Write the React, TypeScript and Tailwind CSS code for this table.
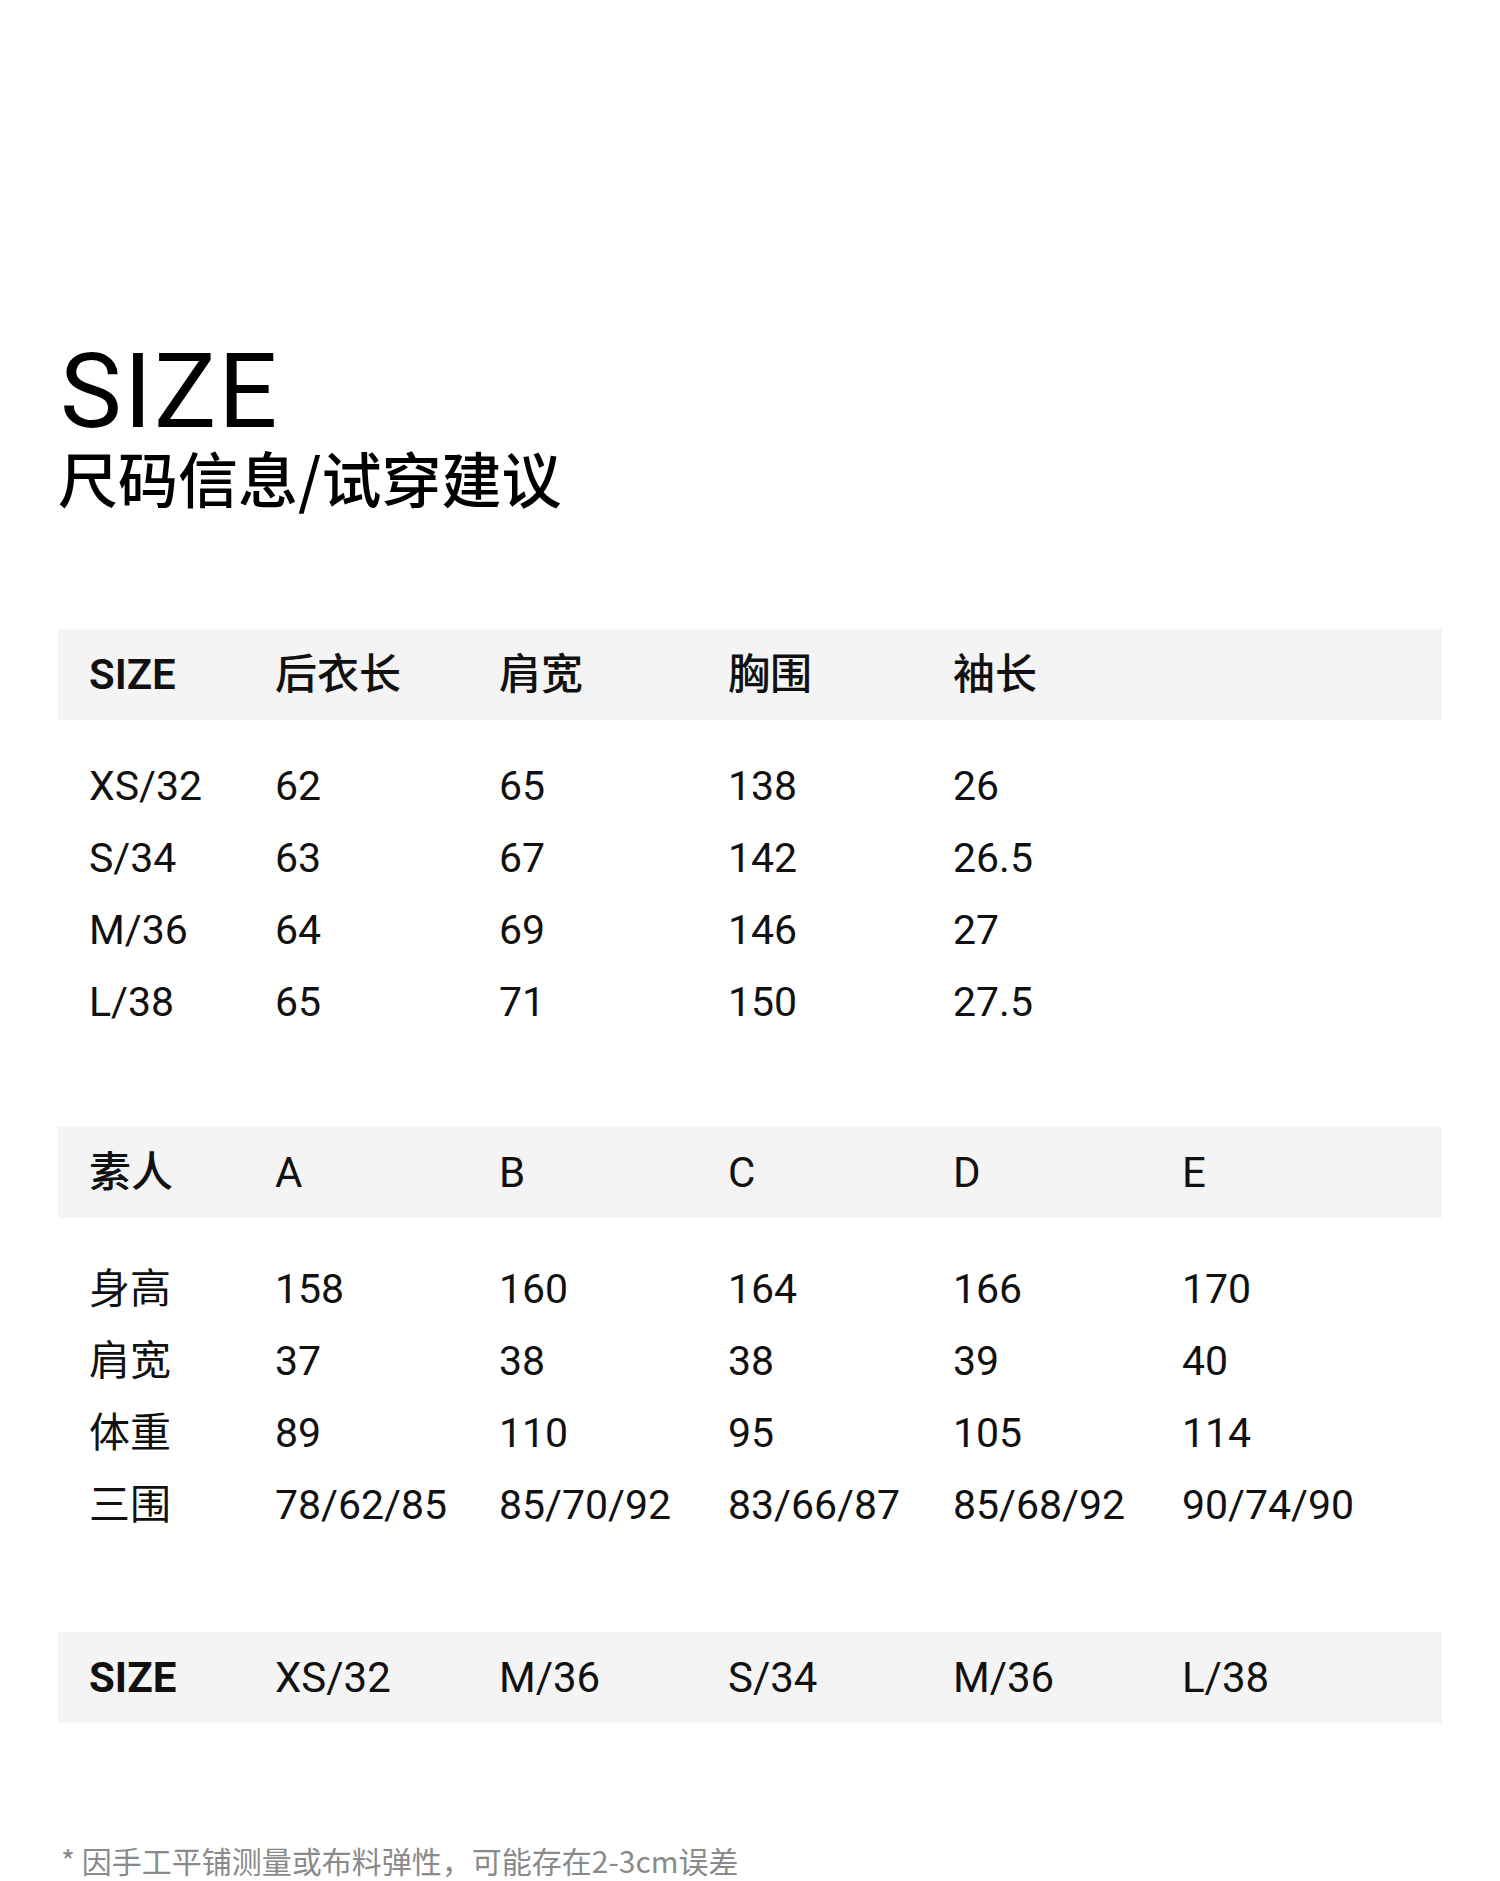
import React from "react";

const cols = "grid grid-cols-[186px_224px_229px_225px_229px_1fr] pl-[31px]";

const sizeRows = [
  ["XS/32", "62", "65", "138", "26"],
  ["S/34", "63", "67", "142", "26.5"],
  ["M/36", "64", "69", "146", "27"],
  ["L/38", "65", "71", "150", "27.5"],
];

const modelRows = [
  ["身高", "158", "160", "164", "166", "170"],
  ["肩宽", "37", "38", "38", "39", "40"],
  ["体重", "89", "110", "95", "105", "114"],
  ["三围", "78/62/85", "85/70/92", "83/66/87", "85/68/92", "90/74/90"],
];

const HeadBand: React.FC<{ cells: string[]; first?: string; rest?: string }> = ({ cells, first, rest }) => (
  <div className={`${cols} h-[91px] items-center bg-[#f4f4f4] text-[42px] leading-none text-[#111]`}>
    {cells.map((c, i) => (
      <div key={i} className={i === 0 ? first : rest}>
        {c}
      </div>
    ))}
  </div>
);

const Rows: React.FC<{ rows: string[][] }> = ({ rows }) => (
  <div className="flex flex-col">
    {rows.map((r, i) => (
      <div key={i} className={`${cols} h-[72px] items-center text-[41px] leading-none text-[#111]`}>
        {r.map((c, j) => (
          <div key={j} className="whitespace-nowrap">
            {c}
          </div>
        ))}
      </div>
    ))}
  </div>
);

export default function App() {
  return (
    <div className="w-[1500px] bg-white px-[58px] pt-[340px] pb-[5px] font-['Roboto','Noto_Sans_CJK_SC',sans-serif]">
      <h1 className="pl-[2px] text-[104px] leading-none font-normal tracking-[2px] text-black">SIZE</h1>
      <h2 className="mt-[3px] text-[60px] leading-none font-medium text-black font-['Noto_Sans_CJK_SC',sans-serif]">
        尺码信息/试穿建议
      </h2>

      <div className="mt-[122px]">
        <HeadBand
          cells={["SIZE", "后衣长", "肩宽", "胸围", "袖长"]}
          first="font-semibold"
          rest="font-medium"
        />
      </div>
      <div className="pt-[30px]">
        <Rows rows={sizeRows} />
      </div>

      <div className="mt-[89px]">
        <HeadBand cells={["素人", "A", "B", "C", "D", "E"]} first="font-medium" rest="font-normal" />
      </div>
      <div className="pt-[35px]">
        <Rows rows={modelRows} />
      </div>

      <div className="mt-[91px]">
        <HeadBand
          cells={["SIZE", "XS/32", "M/36", "S/34", "M/36", "L/38"]}
          first="font-bold"
          rest="font-normal"
        />
      </div>

      <p className="mt-[122px] pl-[3px] text-[30px] leading-none text-[#8a8a8a] font-['Noto_Sans_CJK_SC',sans-serif]">
        * 因手工平铺测量或布料弹性，可能存在2-3cm误差
      </p>
    </div>
  );
}
